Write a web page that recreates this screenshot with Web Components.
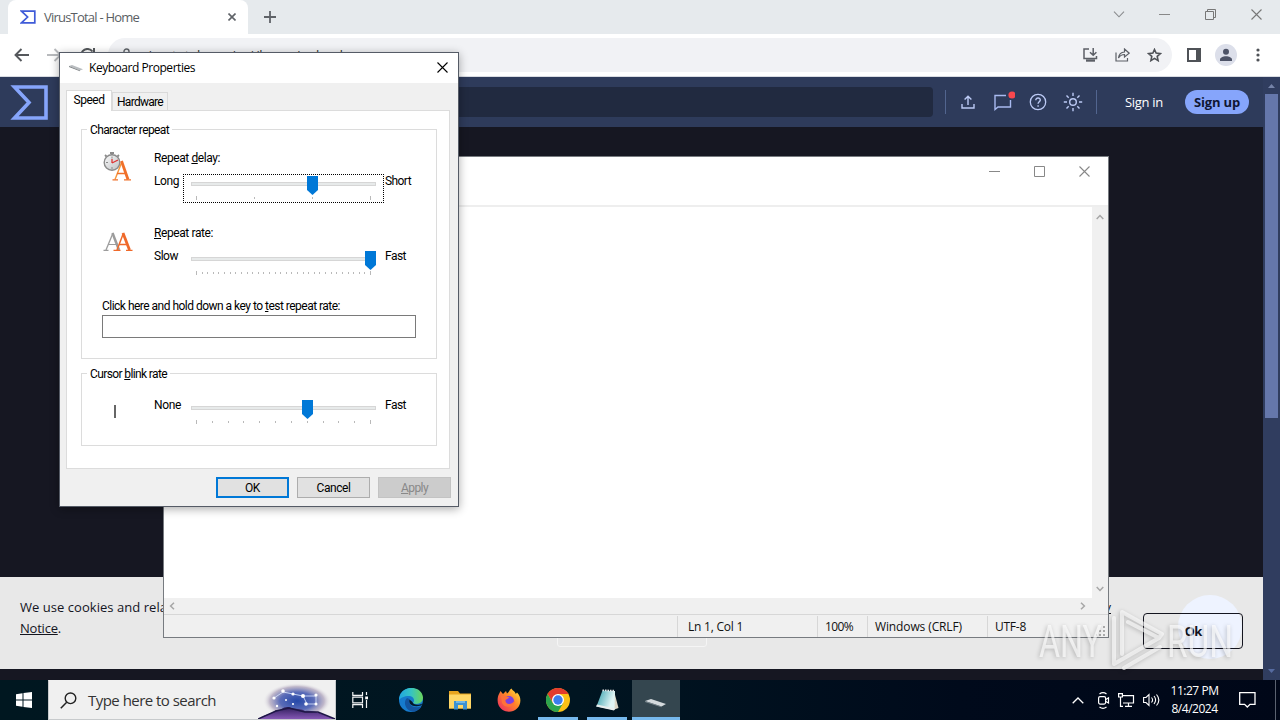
<!DOCTYPE html>
<html lang="en"><head><meta charset="utf-8"><title>Desktop</title>
<style>html,body{margin:0;width:1280px;height:720px;overflow:hidden;background:#14151f}</style></head>
<body><desk-top></desk-top>
<script>
const def=(name,css,html,after)=>customElements.define(name,class extends HTMLElement{
  connectedCallback(){ if(this.shadowRoot)return;
    const r=this.attachShadow({mode:'open'});
    r.innerHTML='<style>*{box-sizing:border-box}'+css+'</style>'+(typeof html==='function'?html(this):html);
    if(after)after(this,r);
  }});
const svg=(w,h,b)=>`<svg width="${w}" height="${h}" viewBox="0 0 ${w} ${h}" fill="none">${b}</svg>`;
const clouds='<defs><radialGradient id="g"><stop stop-color="#2548a8"/><stop offset=".5" stop-color="#5a6cb8"/><stop offset=".8" stop-color="#b3a9c0" stop-opacity=".8"/><stop offset="1" stop-color="#eee" stop-opacity="0"/></radialGradient><linearGradient id="m" x1="0" y1="0" x2="0" y2="1"><stop stop-color="#2c1b58"/><stop offset="1" stop-color="#8558b5"/></linearGradient></defs>';
const kb='<path d="M0 3 3 2 14 6.200 11 7.500Z" fill="#b9bdc0"/><path d="M0 3 11 7.500v.8L0 4Z" fill="#777b7e"/>';
const icons={
 sigma:()=>svg(16,14,'<path d="M1.5 1.2H14.8V12.8H1.5L7.6 7Z" stroke="#3f5bd8" stroke-width="1.7"/>'),
 logo:()=>svg(38,35,'<path d="M4.500 2H36V33H4.500L19 17.500Z" stroke="#86a5fb" stroke-width="3.600"/>'),
 x8:()=>svg(8,8,'<path d="M.5.5 7.5 7.5M7.5.5.5 7.5" stroke="#5f6368" stroke-width="1.6"/>'),
 plus:()=>svg(12,12,'<path d="M6 0V12M0 6H12" stroke="#5f6368" stroke-width="1.8"/>'),
 chev:()=>svg(12,7,'<path d="M1 .7 6 5.8 11 .7" stroke="#8a8c8e" stroke-width="1.1"/>'),
 min:()=>svg(11,11,'<path d="M0 5.5H11" stroke="#888"/>'),
 restore:()=>svg(11,11,'<path d="M.5 2.5h8v8h-8zM2.5 2.5v-2h8v8h-2" stroke="#777"/>'),
 max:()=>svg(11,11,'<path d="M.5.5h10v10H.5z" stroke="#888"/>'),
 close:e=>svg(11,11,`<path d="M.5.5 10.5 10.5M10.5.5.5 10.5" stroke="${e.getAttribute('c')||'#777'}" stroke-width="1.1"/>`),
 back:()=>svg(15,14,'<path d="M15 7H2M7.5 1 1.5 7l6 6" stroke="#55585c" stroke-width="1.9"/>'),
 fwd:()=>svg(15,14,'<path d="M0 7H13M7.5 1l6 6-6 6" stroke="#b8babd" stroke-width="1.9"/>'),
 reload:()=>svg(15,15,'<path d="M12.5 3.5A6.3 6.3 0 1 0 13.5 9M14 0V5.5H8.5" stroke="#55585c" stroke-width="2"/>'),
 lock:()=>svg(9,14,'<path d="M2 6V3.5a2.5 2.5 0 0 1 5 0V6" stroke="#5f6368" stroke-width="1.4"/><rect y="6" width="9" height="7" fill="#5f6368"/>'),
 install:()=>svg(15,14,'<path d="M6 1H1V10.5H13.5V8M10.2 0V7M7 4.3l3.2 3 3.2-3" stroke="#5c5f66" stroke-width="1.5"/><path d="M3 12.5H12" stroke="#5c5f66" stroke-width="2.4"/>'),
 share:()=>svg(15,14,'<path d="M1 4.5V13H12.5V10M3.5 10C4 6 6 4.2 9.5 4V1L14.2 5.2 9.5 9V6.5C6.8 6.5 5 7.7 3.5 10Z" stroke="#5c5f66" stroke-width="1.2"/>'),
 star:()=>svg(15,14,'<path d="M7.5 1.5 9.1 5.1 13.4 5.6 10.2 8.4 11.1 12.6 7.5 10.4 3.9 12.6 4.8 8.4 1.6 5.6 5.9 5.1Z" stroke="#4f5257" stroke-width="1.6"/>'),
 side:()=>svg(14,14,'<path d="M1 1H13V13H1Z" stroke="#4f5257" stroke-width="2"/><path d="M9 1H13V13H9Z" fill="#4f5257"/>'),
 user:()=>svg(22,22,'<circle cx="11" cy="11" r="11" fill="#dcdfea"/><circle cx="11" cy="7.8" r="3" fill="#4d5367"/><path d="M5 17v-1.5c0-2 3-3.3 6-3.3s6 1.3 6 3.3V17Z" fill="#4d5367"/>'),
 dots:()=>svg(4,14,'<g fill="#4f5257"><circle cx="2" cy="2" r="1.6"/><circle cx="2" cy="7" r="1.6"/><circle cx="2" cy="12" r="1.6"/></g>'),
 upload:()=>svg(14,14,'<path d="M1 9V13H13V9M7 10V1.5M3.6 4.6 7 1.2l3.4 3.4" stroke="#bccaf5" stroke-width="1.4"/>'),
 chat:()=>svg(22,20,'<path d="M13 4.5H2V18.5L5 16H17.5V9" stroke="#a9baf0" stroke-width="1.4"/><circle cx="19" cy="4" r="3.6" fill="#f9484e"/>'),
 help:()=>svg(18,18,'<circle cx="9" cy="9" r="7.7" stroke="#bccaf5" stroke-width="1.3"/><path d="M6.8 7.2C6.8 4.2 11.4 4.4 11.3 7.1 11.2 8.8 9.1 8.9 9.1 10.8M9.1 12.2v1.6" stroke="#bccaf5" stroke-width="1.4"/>'),
 sun:()=>svg(20,20,'<circle cx="10" cy="10" r="3.3" stroke="#bccaf5" stroke-width="1.4"/><path d="M10 .8V4M10 16v3.2M.8 10H4M16 10h3.2M3.5 3.5 5.7 5.7M14.3 14.3l2.2 2.2M3.5 16.5l2.2-2.2M14.3 5.7l2.2-2.2" stroke="#bccaf5" stroke-width="1.4"/>'),
 up:()=>svg(7,4,'<path d="M0 4 3.5 0 7 4Z" fill="#7583a8"/>'),
 down:()=>svg(7,4,'<path d="M0 0 3.5 4 7 0Z" fill="#566ba0"/>'),
 cu:()=>svg(8,6,'<path d="M.7 5 4 1.6 7.3 5" stroke="#a6a6a6" stroke-width="1.5"/>'),
 cd:()=>svg(8,6,'<path d="M.7 1 4 4.4 7.3 1" stroke="#a6a6a6" stroke-width="1.5"/>'),
 cl:()=>svg(6,8,'<path d="M5 .7 1.6 4 5 7.3" stroke="#a6a6a6" stroke-width="1.5"/>'),
 cr:()=>svg(6,8,'<path d="M1 .7 4.4 4 1 7.3" stroke="#a6a6a6" stroke-width="1.5"/>'),
 kbd:()=>svg(14,10,kb),
 delay:()=>svg(32,34,'<defs><linearGradient id="o" x2="1" y2="1"><stop stop-color="#fafafa"/><stop offset="1" stop-color="#bfc1c4"/></linearGradient></defs><g stroke="#8b8b8b"><circle cx="10" cy="12.500" r="7.800" fill="url(#o)" stroke-width="1.4"/><path d="M8 3h4M10 3v2M3 5l1.500 1.500M17 5l-1.500 1.500" stroke-width="1.800"/><path d="M10 6.500v2M10 17v2M4 12.500h2" stroke-width="1"/></g><path d="M10 13 16 10M10 13V9" stroke="#d33" stroke-width="1.3"/><g fill="none" stroke="#f0702a"><path d="M13 29.500 20 11.500" stroke="#f7963a" stroke-width="1.4"/><path d="M19.500 11 26 29.500" stroke-width="2.800"/><path d="M15 23.5h9M10.500 29.800h5.500M22 29.800h7" stroke-width="1.3"/></g>'),
 rate:()=>svg(32,22,'<g stroke="#9c9c9c"><path d="M4 19 11 2" stroke-width="1.3"/><path d="M10.5 2 17 19" stroke-width="2.5"/><path d="M6 13.5h8M1.5 19.4h5" stroke-width="1.2"/></g><g stroke="#ef692a"><path d="M15 19 21.5 2" stroke-width="1.5"/><path d="M21 2 27.5 19" stroke-width="2.8"/><path d="M17 13.5h8M11.5 19.4h7M24 19.4h6.5" stroke-width="1.3"/></g>'),
 caret:()=>svg(32,16,'<path d="M13 1V14" stroke="#666" stroke-width="2"/>'),
 start:()=>svg(16,16,'<path d="M0 2.3 6.5 1.3V7.5H0ZM7.5 1.1 16 0V7.5H7.5ZM0 8.5H6.5V14.7L0 13.8ZM7.5 8.5H16V16L7.5 14.9Z" fill="#fff"/>'),
 search:()=>svg(17,17,'<circle cx="10.5" cy="6.3" r="5.3" stroke="#222" stroke-width="1.4"/><path d="M6.7 10.2.8 16.2" stroke="#222" stroke-width="1.5"/>'),
 hill:()=>svg(78,36,clouds+'<ellipse cx="39" cy="18" rx="34" ry="18" fill="url(#g)"/><path d="M0 36C7 31 14 31 18 27 23 29 24 23 31 24 38 27 42 25 47 28 57 27 64 31 77 36Z" fill="url(#m)"/><path d="M0 36 18 28 31 25 47 29 60 29 77 36" stroke="#1e1746" stroke-width="1.5"/><path d="M16 15 25 9 35 11 45 13 58 13M45 13 49 21H58V13" stroke="#dce8ff" stroke-width=".8"/><g fill="#fff"><circle cx="16" cy="15" r="1.6"/><circle cx="25" cy="8" r="1.8"/><circle cx="35" cy="11" r="1.6"/><circle cx="45" cy="13" r="2"/><circle cx="58" cy="12" r="1.6"/><circle cx="48" cy="21" r="1.8"/><circle cx="58" cy="21" r="1.5"/><circle cx="19" cy="23" r="1.2"/><circle cx="35" cy="21" r="1.1"/><circle cx="28" cy="17" r="1"/></g>'),
 task:()=>svg(17,16,'<path d="M.8 0V3.3H10.5V0M.8 16V12.7H10.5V16M.8 5.2H10.5V10.8H.8ZM14.5 0V3M14.5 8V16" stroke="#f2f4f5" stroke-width="1.2"/><path d="M13.2 4.5h2.8v2.8h-2.8z" fill="#fff"/>'),
 edge:()=>svg(24,24,'<defs><linearGradient id="e" x1="0" x2="1"><stop stop-color="#20a6e0"/><stop offset=".5" stop-color="#35c4c4"/><stop offset="1" stop-color="#6bd65a"/></linearGradient></defs><circle cx="12" cy="12" r="12" fill="#167bcd"/><path d="M0 12C.5-4 23-3.500 24 9.500 24 16 17 17 14 15 16.500 12 14.500 8 9.500 8 5.500 8 1.500 10 0 12Z" fill="url(#e)"/><path d="M8 10C3 15 8 24 15 23.700 19 23 21.500 20.500 22.500 18.500 15 21 8.500 17 10.500 11Z" fill="#1355a0"/><path d="M10.500 11.500C9 16 14 20 22 17.500L23.500 15.500C19 18 13.500 16.500 13.500 14Z" fill="#04182a"/>'),
 files:()=>svg(22,20,'<path d="M0 1H9l2 2.500H22V18.500H0Z" fill="#e8a51f"/><path d="M0 4.500H22V18.500H0Z" fill="#ffd766"/><path d="M5 19.500V11H18v8.500H14V15H9v4.500Z" fill="#3c91d2"/><path d="M7 11h9v2H7z" fill="#71b7e6"/>'),
 fox:()=>svg(24,24,'<defs><linearGradient id="f" x1="1" y1="0" x2="0" y2="1"><stop stop-color="#ffec3f"/><stop offset=".45" stop-color="#ff8528"/><stop offset="1" stop-color="#ec2268"/></linearGradient></defs><path d="M2 6 3.500 3 6 6 9 3 10 5.500C12 5 12 2 14.500.500 15.500 3 18 3 18.800 6L20 4.500C25 9 24 17 20 20.500 14 26 4.500 24 1.500 17 0 13 .500 9 2 6Z" fill="url(#f)"/><circle cx="12" cy="13" r="5" fill="#7b3fe0"/><path d="M4 8C8 7 10 8.500 12.500 9.500L8.500 12C8 17 15 17.500 18 12 18 20 8 21 5 15Z" fill="#ff7139"/>'),
 chrome:()=>svg(24,24,'<circle cx="12" cy="12" r="12" fill="#fbc116"/><path d="M12 6H22.400A12 12 0 0 0 1.600 6L7 15Z" fill="#e33b2e"/><path d="M1.600 6A12 12 0 0 0 12 24L17.200 15 12 12 6.800 15Z" fill="#2da44e"/><circle cx="12" cy="12" r="6" fill="#fff"/><circle cx="12" cy="12" r="4.700" fill="#3b7ded"/>'),
 note:()=>svg(24,24,'<defs><linearGradient id="n" x2="1" y2=".4"><stop stop-color="#2f9caa"/><stop offset=".9" stop-color="#dff4f4"/></linearGradient></defs><path d="M19 3 23.500 20 18 22Z" fill="#d9d4c4"/><path d="M7.500 2.500 20 3 19.500 22 1.500 18.500Z" fill="url(#n)"/><path d="M1 18.500 19 22.500 20 20.500 2 16.500Z" fill="#e8eded"/><path d="M7.500 2.300 20 2.800" stroke="#e8e8e8" stroke-width="1.800" stroke-dasharray="1.500 1"/>'),
 kb2:()=>svg(22,10,'<path d="M0 3 6 1 21 6 16.500 8.500Z" fill="#d4dadd"/><path d="M0 3 16.500 8.500V9.300L0 4Z" fill="#7c8990"/>'),
 tup:()=>svg(12,7,'<path d="M.7 6.300 6 1 11.300 6.300" stroke="#fff" stroke-width="1.300"/>'),
 cam:()=>svg(13,17,'<rect x="1.600" y="4.600" width="7" height="7.500" rx="1.500" stroke="#fff" stroke-width="1.200"/><path d="M8.800 7.500 11.500 5.800V11L8.800 9.500M2.500 2C4.500.500 7.500.500 9.500 2M2.500 15C4.500 16.500 7.500 16.500 9.500 15" stroke="#fff" stroke-width="1.200"/>'),
 net:()=>svg(17,14,'<path d="M5 2.600H15.500V10H5M10.500 10V13M7 13.400H14M.600.600H4.400V4H.600ZM2.500 4V13.400H5" stroke="#fff" stroke-width="1.200"/>'),
 vol:()=>svg(17,14,'<path d="M.600 4.500H3L6 1.500V12.500L3 9.500H.600ZM8.500 4.500C9.800 6 9.800 8 8.500 9.500M11 3C13 5.500 13 8.500 11 11M13.500 1.500C16.500 5 16.500 9 13.500 12.500" stroke="#fff" stroke-width="1.100"/>'),
 bell:()=>svg(17,16,'<path d="M.700.700H16V12.300H11L8.300 15 5.600 12.300H.700Z" stroke="#fff" stroke-width="1.300"/>'),
 grip:()=>svg(10,10,'<path d="M8 0v2M8 4v2M8 8v2M4 4v2M4 8v2M0 8v2" stroke="#aaa" stroke-width="2"/>')
};
def('ui-icon',':host{display:block;flex:none;line-height:0}svg{display:block}',e=>icons[e.getAttribute('name')](e));

def('track-bar',':host{display:block;width:201px;height:29px}:host([focused]){outline:1px dotted #000;outline-offset:-1px}svg{display:block}',e=>{
  const n=+e.getAttribute('ticks'),v=+e.getAttribute('value');let t='';
  for(let i=0;i<n;i++){const x=Math.round(13+174*i/(n-1))+.5;t+=`M${x} ${i&&i<n-1?23:22}V${i&&i<n-1?25:26}`}
  const x=Math.round(13+174*v/(n-1))+.5;
  return svg(201,29,`<rect x="8.500" y="8.500" width="184" height="3" fill="#e7eaea" stroke="#d6d6d6"/><path d="${t}" stroke="#b9b9b9"/><path d="M${x-5.5} 2H${x+5.5}V16L${x} 21 ${x-5.5} 16Z" fill="#0078d7"/>`)});

def('group-box',':host{display:block;border:1px solid #dcdcdc;padding:0 20px}header{width:max-content;height:14px;line-height:14px;margin:-7px 0 0 -15px;padding:0 3px;background:#fff}','<header><slot name="title"></slot></header><slot></slot>');

def('setting-row',':host{display:grid;grid-template-columns:52px 1fr;line-height:14px}.bar{display:flex;height:29px}.bar>span{width:29px}.bar>b{font-weight:400;padding-left:1px}h4{font:inherit;margin:0;height:24px;line-height:16px}:host([plain]) h4{display:none}',
 '<div><slot name="icon"></slot></div><div><h4><slot name="caption"></slot></h4><div class="bar"><span><slot name="low"></slot></span><slot></slot><b><slot name="high"></slot></b></div></div>');

def('push-button',':host{display:flex;align-items:center;justify-content:center;width:73px;height:21px;background:#e1e1e1;border:1px solid #adadad}:host([primary]){border:2px solid #0078d7}:host([disabled]){background:#ccc;border-color:#c3c3c3;color:#888}','<slot></slot>');

def('keyboard-dialog',`:host{display:flex;flex-direction:column;width:400px;height:455px;border:1px solid #555b66;background:#f0f0f0;color:#000;font:12px Roboto,sans-serif}
.title{height:30px;background:#fff;display:flex;align-items:center;padding:0 10px 0 9px;font:12px "Open Sans",sans-serif}
.title .n{margin-left:6px;flex:1;padding-bottom:1px}.title ui-icon[name=close]{margin-bottom:2px}
.tabs{height:27px;display:flex;align-items:flex-end;padding-left:6px}
.tabs div{display:flex;justify-content:center;border:1px solid #dadada;border-bottom:0}
.s{width:46px;height:21px;background:#fff;line-height:19px;margin-bottom:-1px;z-index:1}
.h{width:56px;height:18px;line-height:18px}
.panel{margin:0 8px 0 6px;height:359px;background:#fff;border:1px solid #dcdcdc;padding:18px 12px 0 14px}
.foot{display:flex;gap:8px;justify-content:flex-end;padding:8px 7px 0 0}
.one{height:230px}.two{height:73px;margin-top:14px}
.input{border:1px solid #7a7a7a;height:23px;width:314px;margin-top:1px}
.t{line-height:16px;margin-top:20px}.r1{margin-top:13px}.r2{margin-top:22px}.r3{margin-top:17px}`,
`<div class="title"><ui-icon name="kbd"></ui-icon><div class="n"><fit-text w="106">Keyboard Properties</fit-text></div><ui-icon name="close" c="#000"></ui-icon></div>
<div class="tabs"><div class="s"><fit-text w="31">Speed</fit-text></div><div class="h"><fit-text w="46">Hardware</fit-text></div></div>
<div class="panel">
<group-box class="one"><fit-text slot="title" w="79">Character repeat</fit-text>
<setting-row class="r1"><ui-icon slot="icon" name="delay"></ui-icon><fit-text slot="caption" w="66">Repeat <u>d</u>elay:</fit-text><fit-text slot="low" w="25">Long</fit-text><track-bar focused ticks="4" value="2"></track-bar><fit-text slot="high" w="26">Short</fit-text></setting-row>
<setting-row class="r2"><ui-icon slot="icon" name="rate" style="margin-top:6px"></ui-icon><fit-text slot="caption" w="59"><u>R</u>epeat rate:</fit-text><fit-text slot="low" w="24">Slow</fit-text><track-bar ticks="32" value="31"></track-bar><fit-text slot="high" w="21">Fast</fit-text></setting-row>
<div class="t"><fit-text w="238">Click here and hold down a key to <u>t</u>est repeat rate:</fit-text></div><div class="input"></div></group-box>
<group-box class="two"><fit-text slot="title" w="77">Cursor <u>b</u>link rate</fit-text>
<setting-row plain class="r3"><ui-icon slot="icon" name="caret" style="margin-top:6px"></ui-icon><fit-text slot="low" w="27">None</fit-text><track-bar ticks="12" value="7"></track-bar><fit-text slot="high" w="21">Fast</fit-text></setting-row></group-box>
</div>
<div class="foot"><push-button primary><fit-text w="15">OK</fit-text></push-button><push-button><fit-text w="34">Cancel</fit-text></push-button><push-button disabled><fit-text w="27"><u>A</u>pply</fit-text></push-button></div>`);

def('notepad-window',`:host{display:flex;flex-direction:column;width:946px;height:482px;border:1px solid #777b80;background:#fff;font:12px "Open Sans",sans-serif;color:#111}
.top{height:50px;border-bottom:2px solid #eee;display:flex;justify-content:flex-end;gap:34px;padding:9px 18px 0 0}
.body{flex:1;display:flex;justify-content:flex-end}
.v{width:16px;background:#f0f0f0;display:flex;flex-direction:column;justify-content:space-between;align-items:center;padding:7px 0 6px}
.hs{height:16px;background:#f0f0f0;display:flex;justify-content:space-between;align-items:center;padding:0 22px 0 5px}
.st{height:23px;background:#f0f0f0;border-top:1px solid #d7d7d7;display:flex;justify-content:flex-end}
.st div{border-left:1px solid #d7d7d7;padding-left:10px;height:21px;margin-top:1px;line-height:21px}.st .z{padding-left:7px}
.st .l{width:121px;display:flex;justify-content:space-between;padding:0 2px 0 7px}`,
`<div class="top"><ui-icon name="min"></ui-icon><ui-icon name="max"></ui-icon><ui-icon name="close" c="#888"></ui-icon></div>
<div class="body"><div class="v"><ui-icon name="cu"></ui-icon><ui-icon name="cd"></ui-icon></div></div>
<div class="hs"><ui-icon name="cl"></ui-icon><ui-icon name="cr"></ui-icon></div>
<div class="st"><div style="width:140px"><fit-text w="55">Ln 1, Col 1</fit-text></div><div style="width:50px" class="z"><fit-text w="28">100%</fit-text></div><div style="width:120px" class="z"><fit-text w="87">Windows (CRLF)</fit-text></div><div class="l"><fit-text w="31">UTF-8</fit-text><ui-icon name="grip" style="margin-top:10px"></ui-icon></div></div>`);

def('browser-window',`:host{display:flex;flex-direction:column;height:680px;background:#161722;font:13px "Open Sans",sans-serif}
.strip{height:34px;background:#e6eaed;display:flex;padding-left:8px}
.tab{width:240px;background:#fff;border-radius:8px 8px 0 0;display:flex;align-items:center;padding:0 12px;color:#5a5e63}
.tab .t{flex:1;margin-left:8px;padding-bottom:1px}.plus{margin:11px 0 0 16px}
.ctl{margin-left:auto;display:flex;gap:35px;padding:9px 18px 0 0}.ctl ui-icon:first-child{margin-top:2px;margin-right:-1px}
.bar{height:43px;background:#fff;border-bottom:1px solid #d9dce2;display:flex;align-items:center;padding:0 20px 0 14px}
.bar>ui-icon{margin-right:18px}
.omni{width:1065px;height:34px;border-radius:17px;background:#f1f2f5;display:flex;align-items:center;padding:0 10px 0 14px;color:#333;margin-left:-1px}
.omni .u{margin-left:11px;flex:1;padding-bottom:1px}.omni ui-icon+ui-icon{margin-left:17px}
.view{flex:1;display:flex;min-height:0}.page{width:1263px;display:flex;flex-direction:column}
.sb{width:17px;background:#303d5f;display:flex;flex-direction:column;align-items:center;padding:7px 0;justify-content:space-between}
.sb i{width:13px;height:324px;background:#6577ab;margin-top:6px}
.head{height:50px;background:#2e3b5b;display:flex;align-items:center;padding:0 14px 0 10px;color:#fff}
.q{width:873px;height:30px;border-radius:4px;background:#212a40;margin-left:12px}
hr{width:1px;height:24px;border:0;background:#52658f;margin:0}
.up{width:64px;height:24px;border-radius:12px;background:#86a5fb;color:#101733;display:flex;align-items:center;justify-content:center;font-weight:700;margin-left:22px}
.dark{height:450px}.cook{height:92px;background:#e8e8e8;display:flex;padding:20px 20px 0;color:#14151f}
.cook p{margin:0;width:1091px;line-height:21px}.cook .ln{display:flex;justify-content:space-between}
.ok{width:100px;height:36px;border:1px solid #14151f;border-radius:4px;margin:16px 0 0 32px;display:flex;align-items:center;justify-content:center;font-weight:700;position:relative}
.ok::before{content:"";position:absolute;left:34px;top:-19px;width:64px;height:64px;border-radius:50%;background:#eef3ff;z-index:-1}.cook{position:relative;z-index:0}`,
`<div class="strip"><div class="tab"><ui-icon name="sigma"></ui-icon><div class="t"><fit-text w="95">VirusTotal - Home</fit-text></div><ui-icon name="x8"></ui-icon></div><ui-icon class="plus" name="plus"></ui-icon><div class="ctl"><ui-icon name="chev"></ui-icon><ui-icon name="min"></ui-icon><ui-icon name="restore"></ui-icon><ui-icon name="close"></ui-icon></div></div>
<div class="bar"><ui-icon name="back"></ui-icon><ui-icon name="fwd"></ui-icon><ui-icon name="reload" style="margin-right:14px"></ui-icon><div class="omni"><ui-icon name="lock"></ui-icon><div class="u"><fit-text w="201">virustotal.com/gui/home/upload</fit-text></div><ui-icon name="install"></ui-icon><ui-icon name="share"></ui-icon><ui-icon name="star"></ui-icon></div><ui-icon name="side" style="margin:0 14px 0 15px"></ui-icon><ui-icon name="user" style="margin-right:19px"></ui-icon><ui-icon name="dots" style="margin:0"></ui-icon></div>
<div class="view"><div class="page"><div class="head"><ui-icon name="logo"></ui-icon><div class="q"></div><hr style="margin-left:12px"><ui-icon name="upload" style="margin-left:15px"></ui-icon><ui-icon name="chat" style="margin:-3px 0 0 18px"></ui-icon><ui-icon name="help" style="margin-left:14px"></ui-icon><ui-icon name="sun" style="margin:0 13px 0 16px"></ui-icon><hr><div style="margin-left:28px"><fit-text w="38">Sign in</fit-text></div><div class="up"><fit-text w="46">Sign up</fit-text></div></div>
<div class="dark"></div>
<div class="cook"><p><span class="ln"><fit-text w="167">We use cookies and related</fit-text><u>Privacy</u></span><fit-text w="41"><u>Notice</u>.</fit-text></p><div class="ok"><fit-text w="17">Ok</fit-text></div></div></div>
<div class="sb"><div><ui-icon name="up" style="margin-left:3px"></ui-icon><i style="display:block"></i></div><ui-icon name="down"></ui-icon></div></div>`);

def('task-button',':host{display:flex;width:49px;height:40px;align-items:center;justify-content:center;position:relative}:host([open])::after{content:"";position:absolute;bottom:0;left:4.5px;width:40px;height:3px;background:#76b9ed}:host([active]){width:48px;background:#34464f}:host([active])::after{left:0;width:48px}','<slot></slot>');

def('task-bar',`:host{display:flex;height:40px;background:linear-gradient(90deg,#001720,#001521 45%,#000a1b 75%,#000718);color:#fff;font:12px "Open Sans",sans-serif}
.start{width:48px;display:flex;align-items:center;justify-content:center}
.find{width:288px;background:#f0f0f0;border:1px solid #c7cacc;border-top-color:#f0f0f0;display:flex;align-items:center;padding-left:11px;font-size:15px;color:#333}
.find div{margin-left:11px;flex:1}.find ui-icon[name=hill]{align-self:flex-end;margin-right:-1px}
.tray{margin-left:auto;display:flex;align-items:center}.time{width:65px;display:flex;flex-direction:column;align-items:center;line-height:18px;margin:0 12px 0 2px;padding-bottom:1px}
.end{width:20px;height:40px;border-right:1px solid #5a6270;margin-right:4px}`,
`<div class="start"><ui-icon name="start"></ui-icon></div><div class="find"><ui-icon name="search"></ui-icon><div><fit-text w="128">Type here to search</fit-text></div><ui-icon name="hill"></ui-icon></div>
<task-button><ui-icon name="task"></ui-icon></task-button><task-button style="margin-left:1px"><ui-icon name="edge"></ui-icon></task-button><task-button><ui-icon name="files"></ui-icon></task-button><task-button><ui-icon name="fox"></ui-icon></task-button><task-button open><ui-icon name="chrome"></ui-icon></task-button><task-button open><ui-icon name="note"></ui-icon></task-button><task-button open active style="margin-left:1px"><ui-icon name="kb2" style="margin-top:6px"></ui-icon></task-button>
<div class="tray"><ui-icon name="tup"></ui-icon><ui-icon name="cam" style="margin-left:13px"></ui-icon><ui-icon name="net" style="margin-left:8px"></ui-icon><ui-icon name="vol" style="margin-left:8px"></ui-icon><div class="time"><fit-text w="48">11:27 PM</fit-text><fit-text w="46">8/4/2024</fit-text></div><ui-icon name="bell"></ui-icon><div class="end"></div></div>`);

def('water-mark',':host{display:block;pointer-events:none}svg{display:block;filter:drop-shadow(-1px 1px 2px #0005)}text{font:400 45px Roboto,sans-serif}',
svg(240,90,`<g fill="#fff" opacity=".66"><text x="9" y="67" textLength="63" lengthAdjust="spacingAndGlyphs">ANY</text><text x="137" y="67" textLength="66" lengthAdjust="spacingAndGlyphs">RUN</text></g><g stroke="#fff" stroke-width="4" stroke-linejoin="round" stroke-linecap="round" opacity=".6"><path d="M84 28V74L129 48M92 64V22L132 44L129 48L98 32M94 78 130 57"/></g>`));

def('desk-top',`:host{display:block;position:relative;width:1280px;height:720px;overflow:hidden}
notepad-window{position:absolute;left:163px;top:156px}keyboard-dialog{position:absolute;left:59px;top:52px;box-shadow:0 2px 9px #0005}
.ghost{position:absolute;left:557px;top:620px;width:150px;height:27px;border:1px solid #f5f5f5;border-radius:3px}
water-mark{position:absolute;left:1030px;top:590px}`,
`<browser-window></browser-window><task-bar></task-bar><div class="ghost"></div><notepad-window></notepad-window><keyboard-dialog></keyboard-dialog><water-mark></water-mark>`);

/* Spreads a run of text to a set width through its letter spacing. */
def('fit-text',':host{display:inline-block;white-space:nowrap}span{display:inline-block;white-space:pre}','<span><slot></slot></span>',(e,r)=>{
  const s=r.querySelector('span'),w=+e.getAttribute('w');
  const n=e.textContent.length,nat=s.getBoundingClientRect().width;
  s.style.letterSpacing=((w-nat)/n)+'px';e.style.width=w+'px';
});
</script></body></html>
